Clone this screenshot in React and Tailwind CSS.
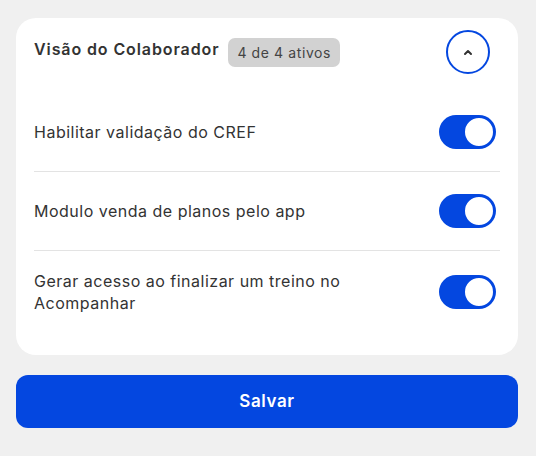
import { useState } from 'react';

const settings = [
  { id: 'cref', label: 'Habilitar validação do CREF' },
  { id: 'venda', label: 'Modulo venda de planos pelo app' },
  { id: 'acesso', label: 'Gerar acesso ao finalizar um treino no Acompanhar' },
];

const Toggle = ({ on, onChange }) => (
  <button
    type="button"
    onClick={onChange}
    className={`relative flex h-[34px] w-[57px] shrink-0 items-center rounded-full ${on ? 'bg-[#0447e0]' : 'bg-gray-300'}`}
  >
    <span
      className={`absolute top-[1px] h-[32px] w-[32px] rounded-full border-2 bg-white ${on ? 'right-[1px] border-[#0447e0]' : 'left-[1px] border-gray-300'}`}
    />
  </button>
);

const App = () => {
  const [values, setValues] = useState({ cref: true, venda: true, acesso: true });

  return (
    <div className="min-h-screen bg-[#f0f0f0] pl-4 pr-[18px] pt-[18px] font-['Inter',sans-serif] text-[#333]">
      <div className="rounded-[20px] bg-white px-[18px] pb-[22px]">
        {/* Header */}
        <div className="flex items-center pt-3 pb-[41px]">
          <h2 className="-mt-[7px] text-[16px] font-semibold tracking-[0.9px] text-[#333]">Visão do Colaborador</h2>
          <span className="ml-[9px] flex h-[29px] items-center rounded-[7px] bg-[#d2d2d2] px-[9px] text-[14px] tracking-[0.6px] text-[#444]">
            4 de 4 ativos
          </span>
          <button
            type="button"
            className="ml-auto mr-[10px] flex h-[44px] w-[44px] items-center justify-center rounded-full border-2 border-[#0447e0]"
          >
            <svg width="10" height="7" viewBox="0 0 10 7" fill="none">
              <path d="M2 5L5 2L8 5" stroke="#333" strokeWidth="2" strokeLinecap="round" strokeLinejoin="round" />
            </svg>
          </button>
        </div>

        {/* Rows */}
        <div className="flex flex-col">
          {settings.map((s, i) => (
            <div
              key={s.id}
              className={`flex items-center justify-between gap-6 pr-[4px] ${i > 0 ? 'border-t border-[#e3e3e3] py-[22px]' : 'pb-[22px]'}`}
            >
              <span className="-my-[3px] max-w-[330px] text-[16px] leading-[22px] tracking-[0.5px]">{s.label}</span>
              <Toggle on={values[s.id]} onChange={() => setValues({ ...values, [s.id]: !values[s.id] })} />
            </div>
          ))}
        </div>
      </div>

      <button
        type="button"
        className="mt-[20px] h-[53px] w-full rounded-[12px] bg-[#0447e0] text-[17px] font-semibold tracking-[0.6px] text-white"
      >
        Salvar
      </button>
    </div>
  );
};

export default App;
